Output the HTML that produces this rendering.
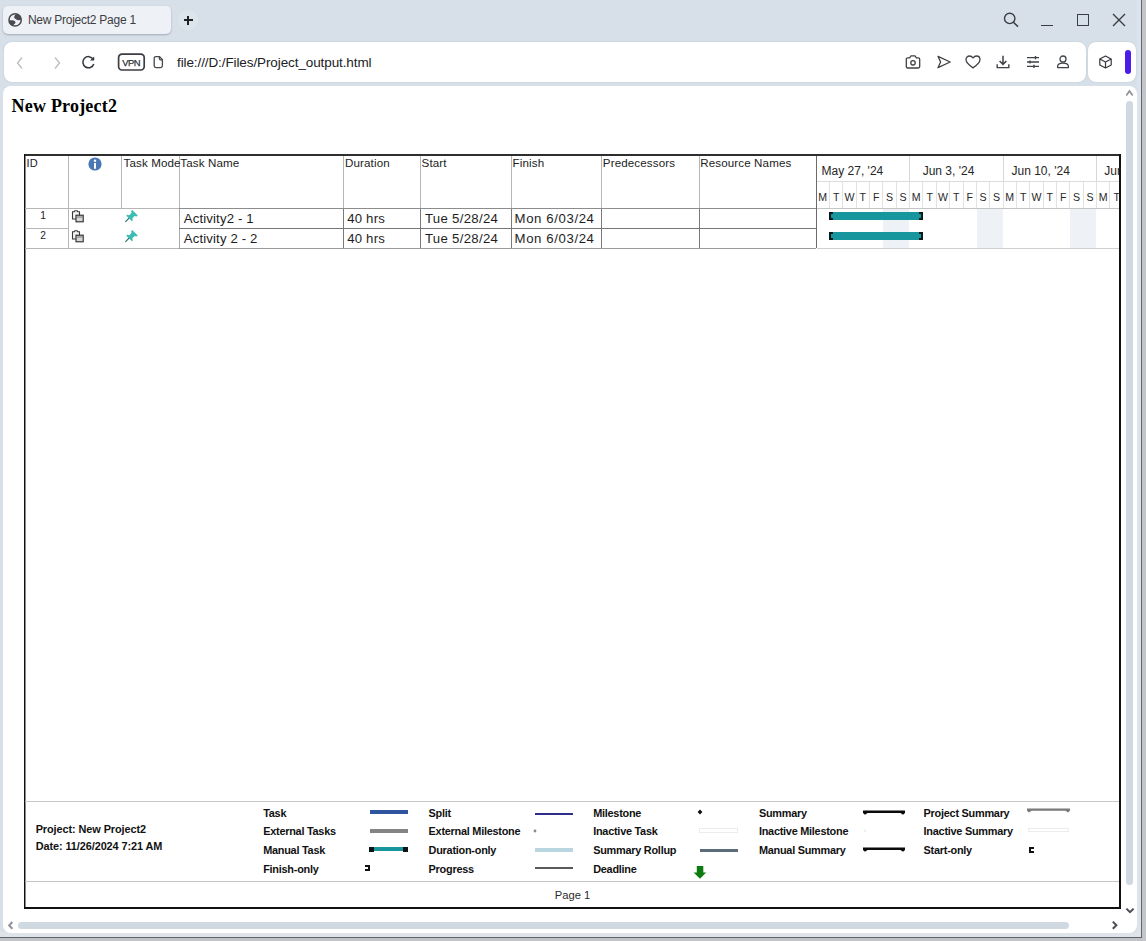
<!DOCTYPE html><html><head><meta charset="utf-8"><style>html,body{margin:0;padding:0;}body{width:1146px;height:941px;position:relative;overflow:hidden;background:#d7e0e8;font-family:"Liberation Sans",sans-serif;}svg{overflow:visible;}</style></head><body><div style="position:absolute;left:1141px;top:0px;width:1px;height:938px;background:#62676d;"></div><div style="position:absolute;left:1142px;top:0px;width:4px;height:941px;background:#c4c5c9;"></div><div style="position:absolute;left:0px;top:937px;width:1142px;height:1px;background:#5f646a;"></div><div style="position:absolute;left:0px;top:938px;width:1142px;height:3px;background:#c2c3c7;"></div><div style="position:absolute;left:1137px;top:0px;width:4px;height:937px;background:#dce3ec;"></div><div style="position:absolute;left:0px;top:932px;width:1141px;height:5px;background:#dee4e9;"></div><div style="position:absolute;left:3px;top:6px;width:168px;height:28px;background:#eef1f6;border-radius:5px;box-shadow:0 1px 2px rgba(60,70,90,0.35);"></div><svg style="position:absolute;left:5px;top:10px;" width="20" height="20" viewBox="0 0 20 20"><circle cx="10.1" cy="9.9" r="6.15" fill="none" stroke="#4a4b4e" stroke-width="1.5"/><path d="M10.4 4.4 C9.6 5.4 9.0 6.6 9.2 7.6 C9.5 8.6 10.6 9.0 11.4 9.6 C12.2 10.2 13.0 10.4 14.0 10.2 L16.2 9.8 L16.2 7.2 C15.4 5.2 13.4 3.8 10.4 4.4 Z" fill="#4a4b4e"/><path d="M3.8 10.6 C5.2 10.2 7.2 10.0 8.6 10.6 C10.0 11.2 10.8 12.0 10.4 13.0 C10.0 13.8 9.0 14.2 8.4 15.0 L7.8 16.0 C5.6 15.4 4.2 13.4 3.8 10.6 Z" fill="#4a4b4e"/></svg><div style="position:absolute;left:27.9px;top:13.84px;font-family:'Liberation Sans', sans-serif;font-size:12px;line-height:12px;font-weight:normal;color:#3c3d40;white-space:nowrap;letter-spacing:-0.25px;">New Project2 Page 1</div><div style="position:absolute;left:178px;top:10px;width:20px;height:20px;background:#dde5ec;border-radius:10px;"></div><div style="position:absolute;left:183.5px;top:19px;width:9px;height:2px;background:#1f2227;"></div><div style="position:absolute;left:187px;top:15.5px;width:2px;height:9px;background:#1f2227;"></div><svg style="position:absolute;left:1000px;top:8px;" width="24" height="24" viewBox="0 0 24 24"><circle cx="9.7" cy="10.4" r="5.2" fill="none" stroke="#3a3d42" stroke-width="1.4"/><line x1="13.4" y1="14.2" x2="18" y2="18.6" stroke="#3a3d42" stroke-width="1.5"/></svg><div style="position:absolute;left:1041px;top:24.5px;width:12px;height:1.3px;background:#3a3d42;"></div><div style="position:absolute;left:1077px;top:14px;width:12px;height:12px;background:transparent;border:1.3px solid #3a3d42;box-sizing:border-box;"></div><svg style="position:absolute;left:1110px;top:11px;" width="18" height="18" viewBox="0 0 18 18"><path d="M3 3 L15 15 M15 3 L3 15" stroke="#3a3d42" stroke-width="1.4"/></svg><div style="position:absolute;left:4px;top:42px;width:1081.5px;height:40px;background:#ffffff;border-radius:8px;box-shadow:0 0 1.5px rgba(60,75,85,0.22);"></div><svg style="position:absolute;left:12px;top:54px;" width="16" height="18" viewBox="0 0 16 18"><path d="M10 3.5 L5.5 9 L10 14.5" fill="none" stroke="#b9bcc0" stroke-width="1.3"/></svg><svg style="position:absolute;left:49px;top:54px;" width="16" height="18" viewBox="0 0 16 18"><path d="M6 3.5 L10.5 9 L6 14.5" fill="none" stroke="#b9bcc0" stroke-width="1.3"/></svg><svg style="position:absolute;left:79px;top:53px;" width="18" height="18" viewBox="0 0 18 18"><path d="M14.2 6.2 A5.6 5.6 0 1 0 14.8 11" fill="none" stroke="#33363b" stroke-width="1.5"/><path d="M15.2 3.4 L15.2 7.6 L11 7.6 Z" fill="#33363b"/></svg><svg style="position:absolute;left:116px;top:52px;" width="30" height="20" viewBox="0 0 30 20"><rect x="2.6" y="2.2" width="25.6" height="15.8" rx="3.4" fill="none" stroke="#3a3d42" stroke-width="1.7"/></svg><div style="position:absolute;left:122.2px;top:57.84px;font-family:'Liberation Sans', sans-serif;font-size:9.4px;line-height:9.4px;font-weight:normal;color:#2e3136;white-space:nowrap;letter-spacing:-0.45px;-webkit-text-stroke:0.25px #2e3136;">VPN</div><svg style="position:absolute;left:150px;top:54px;" width="16" height="16" viewBox="0 0 16 16"><path d="M6 2.6 L9.6 2.6 L12.4 5.6 L12.4 11.8 C12.4 13.2 11.8 13.6 10.6 13.6 L6 13.6 C4.8 13.6 4.2 13.2 4.2 11.8 L4.2 4.4 C4.2 3.2 4.8 2.6 6 2.6 Z M9.4 2.8 L9.4 4.6 C9.4 5.3 9.8 5.8 10.6 5.8 L12.2 5.8" fill="none" stroke="#45484d" stroke-width="1.3" stroke-linejoin="round"/></svg><div style="position:absolute;left:177px;top:55.77px;font-family:'Liberation Sans', sans-serif;font-size:13.5px;line-height:13.5px;font-weight:normal;color:#202124;white-space:nowrap;letter-spacing:-0.1px;">file:///D:/Files/Project_output.html</div><svg style="position:absolute;left:904px;top:54px;" width="18" height="16" viewBox="0 0 18 16"><path d="M2.3 5.2 C2.3 4.4 2.9 3.8 3.7 3.8 L5.6 3.8 L7 1.9 L11 1.9 L12.4 3.8 L14.3 3.8 C15.1 3.8 15.7 4.4 15.7 5.2 L15.7 12.6 C15.7 13.4 15.1 14 14.3 14 L3.7 14 C2.9 14 2.3 13.4 2.3 12.6 Z" fill="none" stroke="#3f4246" stroke-width="1.3" stroke-linejoin="round"/><circle cx="9" cy="8.8" r="2.2" fill="none" stroke="#3f4246" stroke-width="1.3"/></svg><svg style="position:absolute;left:935px;top:54px;" width="18" height="16" viewBox="0 0 18 16"><path d="M3 2.3 L15.2 8 L3 13.7 L5.6 8 Z" fill="none" stroke="#3f4246" stroke-width="1.3" stroke-linejoin="round"/></svg><svg style="position:absolute;left:964px;top:54px;" width="18" height="16" viewBox="0 0 18 16"><path d="M9 13.9 C4 10.5 2 8.3 2 5.6 C2 3.5 3.6 2 5.5 2 C7 2 8.2 2.8 9 4 C9.8 2.8 11 2 12.5 2 C14.4 2 16 3.5 16 5.6 C16 8.3 14 10.5 9 13.9 Z" fill="none" stroke="#3f4246" stroke-width="1.3" stroke-linejoin="round"/></svg><svg style="position:absolute;left:994px;top:54px;" width="18" height="16" viewBox="0 0 18 16"><path d="M9 1.8 L9 10.2 M5.6 7 L9 10.4 L12.4 7" fill="none" stroke="#3f4246" stroke-width="1.5"/><path d="M3.2 10.2 L3.2 13.6 L14.8 13.6 L14.8 10.2" fill="none" stroke="#3f4246" stroke-width="1.4"/></svg><svg style="position:absolute;left:1024px;top:54px;" width="18" height="16" viewBox="0 0 18 16"><path d="M3 3.6 L15 3.6 M3 8 L15 8 M3 12.4 L15 12.4" stroke="#3f4246" stroke-width="1.3"/><path d="M11.5 2 L11.5 5.2 M6 6.4 L6 9.6 M10 10.8 L10 14" stroke="#3f4246" stroke-width="1.4"/></svg><svg style="position:absolute;left:1054px;top:54px;" width="18" height="16" viewBox="0 0 18 16"><circle cx="9" cy="5" r="3" fill="none" stroke="#3f4246" stroke-width="1.3"/><path d="M3.6 13.6 L3.6 12.6 C3.6 10.6 5.6 9.2 9 9.2 C12.4 9.2 14.4 10.6 14.4 12.6 L14.4 13.6 Z" fill="none" stroke="#3f4246" stroke-width="1.3" stroke-linejoin="round"/></svg><div style="position:absolute;left:1088px;top:42px;width:48px;height:39.5px;background:#ffffff;border-radius:8px;box-shadow:0 0 1.5px rgba(60,75,85,0.22);"></div><svg style="position:absolute;left:1097px;top:54px;" width="17" height="16" viewBox="0 0 17 16"><path d="M8.5 2 L14.2 5 L14.2 11 L8.5 14 L2.8 11 L2.8 5 Z M2.8 5 L8.5 8 L14.2 5 M8.5 8 L8.5 14" fill="none" stroke="#33363b" stroke-width="1.2" stroke-linejoin="round"/></svg><div style="position:absolute;left:1125px;top:50px;width:6px;height:23.5px;background:#4a1ee8;border-radius:3px;"></div><div style="position:absolute;left:3px;top:86px;width:1133.5px;height:847px;background:#ffffff;border-radius:8px;"></div><svg style="position:absolute;left:1124px;top:88px;" width="12" height="10" viewBox="0 0 12 10"><path d="M2.3 7.6 L5.5 3.0 L8.7 7.6" fill="none" stroke="#8e9196" stroke-width="1.7"/></svg><div style="position:absolute;left:1126px;top:101px;width:7px;height:784px;background:#d0d8e2;border-radius:3.5px;"></div><svg style="position:absolute;left:1124px;top:906px;" width="12" height="10" viewBox="0 0 12 10"><path d="M2.4 2.6 L6 6.2 L9.6 2.6" fill="none" stroke="#4a4e54" stroke-width="2"/></svg><svg style="position:absolute;left:5px;top:920px;" width="12" height="11" viewBox="0 0 12 11"><path d="M7.4 2.0 L4.2 5.4 L7.4 8.8" fill="none" stroke="#8e9196" stroke-width="2"/></svg><div style="position:absolute;left:18px;top:922px;width:1051px;height:7px;background:#d0d8e2;border-radius:3.5px;"></div><svg style="position:absolute;left:1109px;top:920px;" width="12" height="11" viewBox="0 0 12 11"><path d="M3.8 1.6 L7.4 5.2 L3.8 8.8" fill="none" stroke="#4a4e54" stroke-width="2"/></svg><div style="position:absolute;left:11.6px;top:96.92px;font-family:'Liberation Serif', serif;font-size:18px;line-height:18px;font-weight:bold;color:#000;white-space:nowrap;letter-spacing:0.2px;">New Project2</div><div style="position:absolute;left:24px;top:154px;width:1097px;height:2px;background:#2e2e2e;"></div><div style="position:absolute;left:24px;top:154px;width:1px;height:755px;background:#111;"></div><div style="position:absolute;left:25px;top:156px;width:1px;height:751px;background:#8a8a8a;"></div><div style="position:absolute;left:1119.4px;top:154px;width:1.9px;height:755px;background:#111;"></div><div style="position:absolute;left:24px;top:907.3px;width:1097px;height:1.8px;background:#111;"></div><div style="position:absolute;left:68px;top:156px;width:1px;height:52px;background:#b6b6b6;"></div><div style="position:absolute;left:121px;top:156px;width:1px;height:52px;background:#b6b6b6;"></div><div style="position:absolute;left:178.5px;top:156px;width:1px;height:52px;background:#b6b6b6;"></div><div style="position:absolute;left:342.5px;top:156px;width:1px;height:52px;background:#b6b6b6;"></div><div style="position:absolute;left:420px;top:156px;width:1px;height:52px;background:#b6b6b6;"></div><div style="position:absolute;left:510.5px;top:156px;width:1px;height:52px;background:#b6b6b6;"></div><div style="position:absolute;left:601px;top:156px;width:1px;height:52px;background:#b6b6b6;"></div><div style="position:absolute;left:698.5px;top:156px;width:1px;height:52px;background:#b6b6b6;"></div><div style="position:absolute;left:816px;top:156px;width:1px;height:92px;background:#6b6b6b;"></div><div style="position:absolute;left:68px;top:208px;width:1px;height:40px;background:#b6b6b6;"></div><div style="position:absolute;left:178.5px;top:208px;width:1px;height:40px;background:#a8a8a8;"></div><div style="position:absolute;left:342.5px;top:208px;width:1px;height:40px;background:#7a7a7a;"></div><div style="position:absolute;left:420px;top:208px;width:1px;height:40px;background:#7a7a7a;"></div><div style="position:absolute;left:510.5px;top:208px;width:1px;height:40px;background:#7a7a7a;"></div><div style="position:absolute;left:601px;top:208px;width:1px;height:40px;background:#7a7a7a;"></div><div style="position:absolute;left:698.5px;top:208px;width:1px;height:40px;background:#7a7a7a;"></div><div style="position:absolute;left:25px;top:208px;width:154px;height:1px;background:#b6b6b6;"></div><div style="position:absolute;left:179px;top:208px;width:637px;height:1px;background:#8c8c8c;"></div><div style="position:absolute;left:817px;top:208px;width:302px;height:1px;background:#c4c4c4;"></div><div style="position:absolute;left:25px;top:228px;width:43px;height:1px;background:#b6b6b6;"></div><div style="position:absolute;left:179px;top:228px;width:637px;height:1px;background:#777;"></div><div style="position:absolute;left:25px;top:248px;width:154px;height:1px;background:#b6b6b6;"></div><div style="position:absolute;left:179px;top:248px;width:637px;height:1px;background:#9a9a9a;"></div><div style="position:absolute;left:817px;top:248px;width:302px;height:1px;background:#cfcfcf;"></div><div style="position:absolute;left:26.6px;top:158.19px;font-family:'Liberation Sans', sans-serif;font-size:11px;line-height:11px;font-weight:normal;color:#222;white-space:nowrap;letter-spacing:0px;">ID</div><svg style="position:absolute;left:87.5px;top:157px;" width="14" height="14" viewBox="0 0 14 14"><circle cx="7" cy="7" r="6.6" fill="#4a78b5"/><circle cx="7" cy="3.8" r="1.25" fill="#fff"/><rect x="6" y="5.9" width="2" height="5.8" rx="0.3" fill="#fff"/></svg><div style="position:absolute;left:123.5px;top:157.18px;font-family:'Liberation Sans', sans-serif;font-size:11.6px;line-height:11.6px;font-weight:normal;color:#222;white-space:nowrap;letter-spacing:0.12px;">Task Mode</div><div style="position:absolute;left:180.3px;top:157.18px;font-family:'Liberation Sans', sans-serif;font-size:11.6px;line-height:11.6px;font-weight:normal;color:#222;white-space:nowrap;letter-spacing:0.12px;">Task Name</div><div style="position:absolute;left:345px;top:157.18px;font-family:'Liberation Sans', sans-serif;font-size:11.6px;line-height:11.6px;font-weight:normal;color:#222;white-space:nowrap;letter-spacing:0.12px;">Duration</div><div style="position:absolute;left:421.6px;top:157.18px;font-family:'Liberation Sans', sans-serif;font-size:11.6px;line-height:11.6px;font-weight:normal;color:#222;white-space:nowrap;letter-spacing:0.12px;">Start</div><div style="position:absolute;left:512.6px;top:157.18px;font-family:'Liberation Sans', sans-serif;font-size:11.6px;line-height:11.6px;font-weight:normal;color:#222;white-space:nowrap;letter-spacing:0.12px;">Finish</div><div style="position:absolute;left:602.8px;top:157.18px;font-family:'Liberation Sans', sans-serif;font-size:11.6px;line-height:11.6px;font-weight:normal;color:#222;white-space:nowrap;letter-spacing:0.12px;">Predecessors</div><div style="position:absolute;left:700.2px;top:157.18px;font-family:'Liberation Sans', sans-serif;font-size:11.6px;line-height:11.6px;font-weight:normal;color:#222;white-space:nowrap;letter-spacing:0.12px;">Resource Names</div><div style="position:absolute;left:817px;top:181px;width:302px;height:1px;background:#dcdcdc;"></div><div style="position:absolute;left:909px;top:156px;width:1px;height:25px;background:#d6d6d6;"></div><div style="position:absolute;left:1003px;top:156px;width:1px;height:25px;background:#d6d6d6;"></div><div style="position:absolute;left:1096px;top:156px;width:1px;height:25px;background:#d6d6d6;"></div><div style="position:absolute;left:829px;top:182px;width:1px;height:26px;background:#e2e2e2;"></div><div style="position:absolute;left:842px;top:182px;width:1px;height:26px;background:#e2e2e2;"></div><div style="position:absolute;left:856px;top:182px;width:1px;height:26px;background:#e2e2e2;"></div><div style="position:absolute;left:869px;top:182px;width:1px;height:26px;background:#e2e2e2;"></div><div style="position:absolute;left:882px;top:182px;width:1px;height:26px;background:#e2e2e2;"></div><div style="position:absolute;left:883px;top:209px;width:26px;height:39px;background:#eef1f6;"></div><div style="position:absolute;left:896px;top:182px;width:1px;height:26px;background:#e2e2e2;"></div><div style="position:absolute;left:909px;top:182px;width:1px;height:26px;background:#e2e2e2;"></div><div style="position:absolute;left:922px;top:182px;width:1px;height:26px;background:#e2e2e2;"></div><div style="position:absolute;left:936px;top:182px;width:1px;height:26px;background:#e2e2e2;"></div><div style="position:absolute;left:949px;top:182px;width:1px;height:26px;background:#e2e2e2;"></div><div style="position:absolute;left:963px;top:182px;width:1px;height:26px;background:#e2e2e2;"></div><div style="position:absolute;left:976px;top:182px;width:1px;height:26px;background:#e2e2e2;"></div><div style="position:absolute;left:977px;top:209px;width:26px;height:39px;background:#eef1f6;"></div><div style="position:absolute;left:989px;top:182px;width:1px;height:26px;background:#e2e2e2;"></div><div style="position:absolute;left:1003px;top:182px;width:1px;height:26px;background:#e2e2e2;"></div><div style="position:absolute;left:1016px;top:182px;width:1px;height:26px;background:#e2e2e2;"></div><div style="position:absolute;left:1029px;top:182px;width:1px;height:26px;background:#e2e2e2;"></div><div style="position:absolute;left:1043px;top:182px;width:1px;height:26px;background:#e2e2e2;"></div><div style="position:absolute;left:1056px;top:182px;width:1px;height:26px;background:#e2e2e2;"></div><div style="position:absolute;left:1069px;top:182px;width:1px;height:26px;background:#e2e2e2;"></div><div style="position:absolute;left:1070px;top:209px;width:26px;height:39px;background:#eef1f6;"></div><div style="position:absolute;left:1083px;top:182px;width:1px;height:26px;background:#e2e2e2;"></div><div style="position:absolute;left:1096px;top:182px;width:1px;height:26px;background:#e2e2e2;"></div><div style="position:absolute;left:1109px;top:182px;width:1px;height:26px;background:#e2e2e2;"></div><div style="position:absolute;left:816.10px;top:191.63px;width:13.36px;text-align:center;font-family:'Liberation Sans', sans-serif;font-size:10.6px;line-height:10.6px;color:#2a2a2a">M</div><div style="position:absolute;left:829.46px;top:191.63px;width:13.36px;text-align:center;font-family:'Liberation Sans', sans-serif;font-size:10.6px;line-height:10.6px;color:#2a2a2a">T</div><div style="position:absolute;left:842.81px;top:191.63px;width:13.36px;text-align:center;font-family:'Liberation Sans', sans-serif;font-size:10.6px;line-height:10.6px;color:#2a2a2a">W</div><div style="position:absolute;left:856.17px;top:191.63px;width:13.36px;text-align:center;font-family:'Liberation Sans', sans-serif;font-size:10.6px;line-height:10.6px;color:#2a2a2a">T</div><div style="position:absolute;left:869.53px;top:191.63px;width:13.36px;text-align:center;font-family:'Liberation Sans', sans-serif;font-size:10.6px;line-height:10.6px;color:#2a2a2a">F</div><div style="position:absolute;left:882.89px;top:191.63px;width:13.36px;text-align:center;font-family:'Liberation Sans', sans-serif;font-size:10.6px;line-height:10.6px;color:#2a2a2a">S</div><div style="position:absolute;left:896.24px;top:191.63px;width:13.36px;text-align:center;font-family:'Liberation Sans', sans-serif;font-size:10.6px;line-height:10.6px;color:#2a2a2a">S</div><div style="position:absolute;left:909.60px;top:191.63px;width:13.36px;text-align:center;font-family:'Liberation Sans', sans-serif;font-size:10.6px;line-height:10.6px;color:#2a2a2a">M</div><div style="position:absolute;left:922.96px;top:191.63px;width:13.36px;text-align:center;font-family:'Liberation Sans', sans-serif;font-size:10.6px;line-height:10.6px;color:#2a2a2a">T</div><div style="position:absolute;left:936.31px;top:191.63px;width:13.36px;text-align:center;font-family:'Liberation Sans', sans-serif;font-size:10.6px;line-height:10.6px;color:#2a2a2a">W</div><div style="position:absolute;left:949.67px;top:191.63px;width:13.36px;text-align:center;font-family:'Liberation Sans', sans-serif;font-size:10.6px;line-height:10.6px;color:#2a2a2a">T</div><div style="position:absolute;left:963.03px;top:191.63px;width:13.36px;text-align:center;font-family:'Liberation Sans', sans-serif;font-size:10.6px;line-height:10.6px;color:#2a2a2a">F</div><div style="position:absolute;left:976.39px;top:191.63px;width:13.36px;text-align:center;font-family:'Liberation Sans', sans-serif;font-size:10.6px;line-height:10.6px;color:#2a2a2a">S</div><div style="position:absolute;left:989.74px;top:191.63px;width:13.36px;text-align:center;font-family:'Liberation Sans', sans-serif;font-size:10.6px;line-height:10.6px;color:#2a2a2a">S</div><div style="position:absolute;left:1003.10px;top:191.63px;width:13.36px;text-align:center;font-family:'Liberation Sans', sans-serif;font-size:10.6px;line-height:10.6px;color:#2a2a2a">M</div><div style="position:absolute;left:1016.46px;top:191.63px;width:13.36px;text-align:center;font-family:'Liberation Sans', sans-serif;font-size:10.6px;line-height:10.6px;color:#2a2a2a">T</div><div style="position:absolute;left:1029.81px;top:191.63px;width:13.36px;text-align:center;font-family:'Liberation Sans', sans-serif;font-size:10.6px;line-height:10.6px;color:#2a2a2a">W</div><div style="position:absolute;left:1043.17px;top:191.63px;width:13.36px;text-align:center;font-family:'Liberation Sans', sans-serif;font-size:10.6px;line-height:10.6px;color:#2a2a2a">T</div><div style="position:absolute;left:1056.53px;top:191.63px;width:13.36px;text-align:center;font-family:'Liberation Sans', sans-serif;font-size:10.6px;line-height:10.6px;color:#2a2a2a">F</div><div style="position:absolute;left:1069.89px;top:191.63px;width:13.36px;text-align:center;font-family:'Liberation Sans', sans-serif;font-size:10.6px;line-height:10.6px;color:#2a2a2a">S</div><div style="position:absolute;left:1083.24px;top:191.63px;width:13.36px;text-align:center;font-family:'Liberation Sans', sans-serif;font-size:10.6px;line-height:10.6px;color:#2a2a2a">S</div><div style="position:absolute;left:1096.60px;top:191.63px;width:13.36px;text-align:center;font-family:'Liberation Sans', sans-serif;font-size:10.6px;line-height:10.6px;color:#2a2a2a">M</div><div style="position:absolute;left:1109.96px;top:191.63px;width:13.36px;text-align:center;font-family:'Liberation Sans', sans-serif;font-size:10.6px;line-height:10.6px;color:#2a2a2a">T</div><div style="position:absolute;left:821.6px;top:164.84px;font-family:'Liberation Sans', sans-serif;font-size:12px;line-height:12px;font-weight:normal;color:#262626;white-space:nowrap;letter-spacing:0px;">May 27, &#39;24</div><div style="position:absolute;left:922.7px;top:164.84px;font-family:'Liberation Sans', sans-serif;font-size:12px;line-height:12px;font-weight:normal;color:#262626;white-space:nowrap;letter-spacing:0px;">Jun 3, &#39;24</div><div style="position:absolute;left:1011.5px;top:164.84px;font-family:'Liberation Sans', sans-serif;font-size:12px;line-height:12px;font-weight:normal;color:#262626;white-space:nowrap;letter-spacing:0px;">Jun 10, &#39;24</div><div style="position:absolute;left:1104.3px;top:164.84px;width:17px;overflow:hidden;font-family:'Liberation Sans', sans-serif;font-size:12px;line-height:12px;color:#262626;white-space:nowrap">Jun</div><div style="position:absolute;left:40.2px;top:211.17px;font-family:'Liberation Sans', sans-serif;font-size:10.2px;line-height:10.2px;font-weight:normal;color:#1e1e1e;white-space:nowrap;letter-spacing:0px;">1</div><svg style="position:absolute;left:70.6px;top:209.6px;" width="14" height="14" viewBox="0 0 14 14"><path d="M1.5 1.8 L3.4 1.8 L3.8 0.8 L6.2 0.8 L6.6 1.8 L8.5 1.8 L8.5 9 L1.5 9 Z" fill="#f4f4f4" stroke="#3a3a3a" stroke-width="1.1"/><rect x="5" y="5.2" width="7.2" height="6.6" fill="#d8d8dc" stroke="#2a2a2a" stroke-width="1.1"/><path d="M5.6 7 L11.6 7" stroke="#666" stroke-width="0.8"/></svg><svg style="position:absolute;left:123.6px;top:208.6px;" width="15" height="14" viewBox="0 0 15 14"><path d="M8.2 1.0 L13.8 6.6 L12.6 7.4 L10.6 7.1 L8.4 9.3 L8.8 11.4 L7.9 12.3 L2.3 6.7 L3.2 5.8 L5.3 6.2 L7.5 4.0 L7.2 2.0 Z" fill="#3cbdb4"/><path d="M5.0 9.2 L1.4 12.8" stroke="#2b6f6a" stroke-width="1.2"/></svg><div style="position:absolute;left:183.7px;top:212.03px;font-family:'Liberation Sans', sans-serif;font-size:13.2px;line-height:13.2px;font-weight:normal;color:#1e1e1e;white-space:nowrap;letter-spacing:0.15px;">Activity2 - 1</div><div style="position:absolute;left:347.2px;top:212.03px;font-family:'Liberation Sans', sans-serif;font-size:13.2px;line-height:13.2px;font-weight:normal;color:#1e1e1e;white-space:nowrap;letter-spacing:0.2px;">40 hrs</div><div style="position:absolute;left:425px;top:212.03px;font-family:'Liberation Sans', sans-serif;font-size:13.2px;line-height:13.2px;font-weight:normal;color:#1e1e1e;white-space:nowrap;letter-spacing:0.3px;">Tue 5/28/24</div><div style="position:absolute;left:514.6px;top:212.03px;font-family:'Liberation Sans', sans-serif;font-size:13.2px;line-height:13.2px;font-weight:normal;color:#1e1e1e;white-space:nowrap;letter-spacing:0.6px;">Mon 6/03/24</div><div style="position:absolute;left:829.5px;top:212px;width:93px;height:8px;background:#17979d;"></div><div style="position:absolute;left:829px;top:212px;width:4px;height:8px;box-sizing:border-box;border:2px solid #0d1a1a;border-right:none;"></div><div style="position:absolute;left:919px;top:212px;width:4px;height:8px;box-sizing:border-box;border:2px solid #0d1a1a;border-left:none;"></div><div style="position:absolute;left:40.2px;top:231.17px;font-family:'Liberation Sans', sans-serif;font-size:10.2px;line-height:10.2px;font-weight:normal;color:#1e1e1e;white-space:nowrap;letter-spacing:0px;">2</div><svg style="position:absolute;left:70.6px;top:229.6px;" width="14" height="14" viewBox="0 0 14 14"><path d="M1.5 1.8 L3.4 1.8 L3.8 0.8 L6.2 0.8 L6.6 1.8 L8.5 1.8 L8.5 9 L1.5 9 Z" fill="#f4f4f4" stroke="#3a3a3a" stroke-width="1.1"/><rect x="5" y="5.2" width="7.2" height="6.6" fill="#d8d8dc" stroke="#2a2a2a" stroke-width="1.1"/><path d="M5.6 7 L11.6 7" stroke="#666" stroke-width="0.8"/></svg><svg style="position:absolute;left:123.6px;top:228.6px;" width="15" height="14" viewBox="0 0 15 14"><path d="M8.2 1.0 L13.8 6.6 L12.6 7.4 L10.6 7.1 L8.4 9.3 L8.8 11.4 L7.9 12.3 L2.3 6.7 L3.2 5.8 L5.3 6.2 L7.5 4.0 L7.2 2.0 Z" fill="#3cbdb4"/><path d="M5.0 9.2 L1.4 12.8" stroke="#2b6f6a" stroke-width="1.2"/></svg><div style="position:absolute;left:183.7px;top:232.03px;font-family:'Liberation Sans', sans-serif;font-size:13.2px;line-height:13.2px;font-weight:normal;color:#1e1e1e;white-space:nowrap;letter-spacing:0.15px;">Activity 2 - 2</div><div style="position:absolute;left:347.2px;top:232.03px;font-family:'Liberation Sans', sans-serif;font-size:13.2px;line-height:13.2px;font-weight:normal;color:#1e1e1e;white-space:nowrap;letter-spacing:0.2px;">40 hrs</div><div style="position:absolute;left:425px;top:232.03px;font-family:'Liberation Sans', sans-serif;font-size:13.2px;line-height:13.2px;font-weight:normal;color:#1e1e1e;white-space:nowrap;letter-spacing:0.3px;">Tue 5/28/24</div><div style="position:absolute;left:514.6px;top:232.03px;font-family:'Liberation Sans', sans-serif;font-size:13.2px;line-height:13.2px;font-weight:normal;color:#1e1e1e;white-space:nowrap;letter-spacing:0.6px;">Mon 6/03/24</div><div style="position:absolute;left:829.5px;top:232px;width:93px;height:8px;background:#17979d;"></div><div style="position:absolute;left:829px;top:232px;width:4px;height:8px;box-sizing:border-box;border:2px solid #0d1a1a;border-right:none;"></div><div style="position:absolute;left:919px;top:232px;width:4px;height:8px;box-sizing:border-box;border:2px solid #0d1a1a;border-left:none;"></div><div style="position:absolute;left:25px;top:801px;width:1094px;height:1px;background:#c8c8c8;"></div><div style="position:absolute;left:25px;top:881px;width:1094px;height:1px;background:#c4c4c4;"></div><div style="position:absolute;left:35.7px;top:823.87px;font-family:'Liberation Sans', sans-serif;font-size:10.9px;line-height:10.9px;font-weight:bold;color:#111;white-space:nowrap;letter-spacing:-0.08px;">Project: New Project2</div><div style="position:absolute;left:35.7px;top:840.67px;font-family:'Liberation Sans', sans-serif;font-size:10.9px;line-height:10.9px;font-weight:bold;color:#111;white-space:nowrap;letter-spacing:-0.08px;">Date: 11/26/2024 7:21 AM</div><div style="position:absolute;left:263.2px;top:807.77px;font-family:'Liberation Sans', sans-serif;font-size:10.9px;line-height:10.9px;font-weight:bold;color:#111;white-space:nowrap;letter-spacing:-0.25px;">Task</div><div style="position:absolute;left:263.2px;top:825.77px;font-family:'Liberation Sans', sans-serif;font-size:10.9px;line-height:10.9px;font-weight:bold;color:#111;white-space:nowrap;letter-spacing:-0.25px;">External Tasks</div><div style="position:absolute;left:263.2px;top:844.57px;font-family:'Liberation Sans', sans-serif;font-size:10.9px;line-height:10.9px;font-weight:bold;color:#111;white-space:nowrap;letter-spacing:-0.25px;">Manual Task</div><div style="position:absolute;left:263.2px;top:864.37px;font-family:'Liberation Sans', sans-serif;font-size:10.9px;line-height:10.9px;font-weight:bold;color:#111;white-space:nowrap;letter-spacing:-0.25px;">Finish-only</div><div style="position:absolute;left:428.6px;top:807.77px;font-family:'Liberation Sans', sans-serif;font-size:10.9px;line-height:10.9px;font-weight:bold;color:#111;white-space:nowrap;letter-spacing:-0.25px;">Split</div><div style="position:absolute;left:428.6px;top:825.77px;font-family:'Liberation Sans', sans-serif;font-size:10.9px;line-height:10.9px;font-weight:bold;color:#111;white-space:nowrap;letter-spacing:-0.25px;">External Milestone</div><div style="position:absolute;left:428.6px;top:844.57px;font-family:'Liberation Sans', sans-serif;font-size:10.9px;line-height:10.9px;font-weight:bold;color:#111;white-space:nowrap;letter-spacing:-0.25px;">Duration-only</div><div style="position:absolute;left:428.6px;top:864.37px;font-family:'Liberation Sans', sans-serif;font-size:10.9px;line-height:10.9px;font-weight:bold;color:#111;white-space:nowrap;letter-spacing:-0.25px;">Progress</div><div style="position:absolute;left:593.2px;top:807.77px;font-family:'Liberation Sans', sans-serif;font-size:10.9px;line-height:10.9px;font-weight:bold;color:#111;white-space:nowrap;letter-spacing:-0.25px;">Milestone</div><div style="position:absolute;left:593.2px;top:825.77px;font-family:'Liberation Sans', sans-serif;font-size:10.9px;line-height:10.9px;font-weight:bold;color:#111;white-space:nowrap;letter-spacing:-0.25px;">Inactive Task</div><div style="position:absolute;left:593.2px;top:844.57px;font-family:'Liberation Sans', sans-serif;font-size:10.9px;line-height:10.9px;font-weight:bold;color:#111;white-space:nowrap;letter-spacing:-0.25px;">Summary Rollup</div><div style="position:absolute;left:593.2px;top:864.37px;font-family:'Liberation Sans', sans-serif;font-size:10.9px;line-height:10.9px;font-weight:bold;color:#111;white-space:nowrap;letter-spacing:-0.25px;">Deadline</div><div style="position:absolute;left:758.9px;top:807.77px;font-family:'Liberation Sans', sans-serif;font-size:10.9px;line-height:10.9px;font-weight:bold;color:#111;white-space:nowrap;letter-spacing:-0.25px;">Summary</div><div style="position:absolute;left:758.9px;top:825.77px;font-family:'Liberation Sans', sans-serif;font-size:10.9px;line-height:10.9px;font-weight:bold;color:#111;white-space:nowrap;letter-spacing:-0.25px;">Inactive Milestone</div><div style="position:absolute;left:758.9px;top:844.57px;font-family:'Liberation Sans', sans-serif;font-size:10.9px;line-height:10.9px;font-weight:bold;color:#111;white-space:nowrap;letter-spacing:-0.25px;">Manual Summary</div><div style="position:absolute;left:923.6px;top:807.77px;font-family:'Liberation Sans', sans-serif;font-size:10.9px;line-height:10.9px;font-weight:bold;color:#111;white-space:nowrap;letter-spacing:-0.25px;">Project Summary</div><div style="position:absolute;left:923.6px;top:825.77px;font-family:'Liberation Sans', sans-serif;font-size:10.9px;line-height:10.9px;font-weight:bold;color:#111;white-space:nowrap;letter-spacing:-0.25px;">Inactive Summary</div><div style="position:absolute;left:923.6px;top:844.57px;font-family:'Liberation Sans', sans-serif;font-size:10.9px;line-height:10.9px;font-weight:bold;color:#111;white-space:nowrap;letter-spacing:-0.25px;">Start-only</div><div style="position:absolute;left:370px;top:810px;width:38px;height:4px;background:#2f55a0;"></div><div style="position:absolute;left:370px;top:829px;width:38px;height:4px;background:#848484;"></div><div style="position:absolute;left:370px;top:847.4px;width:38px;height:4px;background:#17979d;"></div><div style="position:absolute;left:369px;top:847px;width:5px;height:5px;background:#0b1414;"></div><div style="position:absolute;left:403px;top:847px;width:5px;height:5px;background:#0b1414;"></div><div style="position:absolute;left:365px;top:865px;width:5px;height:6px;background:transparent;box-sizing:border-box;border:2px solid #111;border-left:none;"></div><div style="position:absolute;left:535px;top:813px;width:38px;height:2px;background:#2e2e8f;"></div><svg style="position:absolute;left:532px;top:828px;" width="6" height="6" viewBox="0 0 6 6"><circle cx="3" cy="3" r="1.4" fill="#8a8a8a"/></svg><div style="position:absolute;left:535px;top:848px;width:38px;height:4px;background:#bad6e0;"></div><div style="position:absolute;left:535px;top:867px;width:38px;height:2px;background:#595959;"></div><svg style="position:absolute;left:696px;top:808px;" width="8" height="8" viewBox="0 0 8 8"><path d="M4 1.6 L6.4 4 L4 6.4 L1.6 4 Z" fill="#111"/></svg><div style="position:absolute;left:699px;top:828px;width:39px;height:5px;background:transparent;box-sizing:border-box;border:1px solid #ececec;"></div><div style="position:absolute;left:700px;top:849px;width:38px;height:3px;background:#5d6c7b;"></div><svg style="position:absolute;left:692px;top:864px;" width="16" height="16" viewBox="0 0 16 16"><path d="M4.8 2 L11.3 2 L11.3 8.4 L14.2 8.4 L8 14.7 L1.6 8.4 L4.8 8.4 Z" fill="#0c7c10"/></svg><svg style="position:absolute;left:863px;top:809.6px;" width="42" height="6" viewBox="0 0 42 6"><path d="M0 0.5 L42 0.5 L42 3 L40 4.8 L37.5 3 L4.5 3 L2 4.8 L0 3 Z" fill="#0a0a0a"/></svg><svg style="position:absolute;left:862px;top:828px;" width="6" height="6" viewBox="0 0 6 6"><circle cx="3" cy="3" r="1.4" fill="#eeeeee"/></svg><svg style="position:absolute;left:863px;top:846.6px;" width="42" height="6" viewBox="0 0 42 6"><path d="M0 0.5 L42 0.5 L42 3 L40 4.8 L37.5 3 L4.5 3 L2 4.8 L0 3 Z" fill="#0a0a0a"/></svg><svg style="position:absolute;left:1027px;top:808px;" width="43" height="6" viewBox="0 0 43 6"><path d="M0 0.6 L43 0.6 L43 2.8 L41 4.6 L38.5 2.8 L4.5 2.8 L2 4.6 L0 2.8 Z" fill="#7a7a7a"/></svg><div style="position:absolute;left:1028px;top:828px;width:41px;height:4px;background:transparent;box-sizing:border-box;border:1px solid #ececec;"></div><div style="position:absolute;left:1029px;top:846.6px;width:5px;height:6px;background:transparent;box-sizing:border-box;border:2px solid #111;border-right:none;"></div><div style="position:absolute;left:554.8px;top:889.52px;font-family:'Liberation Sans', sans-serif;font-size:11.2px;line-height:11.2px;font-weight:normal;color:#2a2a2a;white-space:nowrap;letter-spacing:0px;">Page 1</div></body></html>
